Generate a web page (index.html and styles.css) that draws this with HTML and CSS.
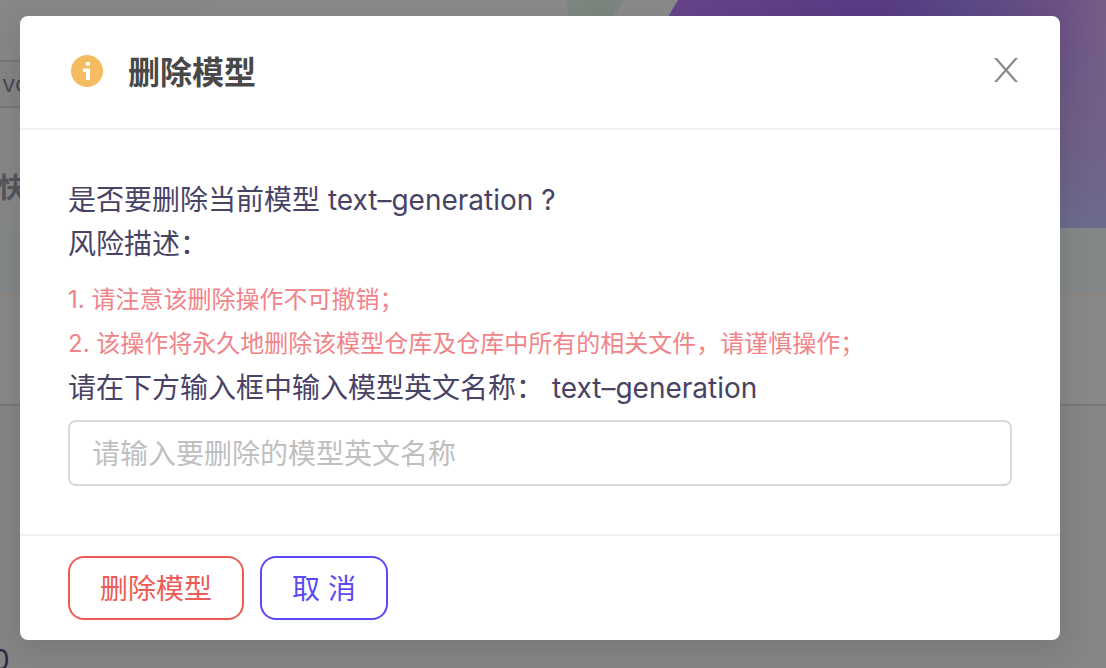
FILE: index.html
```html
<!DOCTYPE html>
<html lang="zh-CN">
<head>
<meta charset="utf-8">
<meta name="viewport" content="width=device-width, initial-scale=1">
<title>删除模型</title>
<link rel="stylesheet" href="styles.css">
</head>
<body>
<div class="screen">
  <div class="page" aria-hidden="true">
    <div class="hero">
      <svg class="hero-art" width="540" height="228" viewBox="0 0 540 228">
        <defs>
          <linearGradient id="band" x1="0" y1="0" x2="1" y2="0">
            <stop offset="0.2" stop-color="#69458b"/>
            <stop offset="0.58" stop-color="#583b85"/>
            <stop offset="0.75" stop-color="#5c4886"/>
            <stop offset="0.9" stop-color="#6a5085"/>
            <stop offset="1" stop-color="#755d86"/>
          </linearGradient>
          <linearGradient id="fade" x1="0" y1="0" x2="0" y2="1">
            <stop offset="0.1" stop-color="#6c6689" stop-opacity="0"/>
            <stop offset="0.55" stop-color="#706387" stop-opacity="0.6"/>
            <stop offset="1" stop-color="#6c6b8c"/>
          </linearGradient>
          <linearGradient id="leaf" x1="0" y1="0" x2="1" y2="0">
            <stop offset="0" stop-color="#7b8880"/>
            <stop offset="1" stop-color="#7c8680"/>
          </linearGradient>
        </defs>
        <path d="M2 0H58L46 18H4Q-1 8 2 0Z" fill="url(#leaf)"/>
        <path d="M112 0H540V228H-22Z" fill="url(#band)"/>
        <path d="M112 0H540V228H-22Z" fill="url(#fade)"/>
      </svg>
      <div class="branch">vo</div>
      <div class="tab">快</div>
    </div>
    <div class="strip"></div>
    <div class="panel"></div>
    <div class="rest"><span class="count">0</span></div>
  </div>

  <section class="modal" role="dialog" aria-modal="true" aria-labelledby="modal-title">
    <header class="modal-header">
      <svg class="info" width="38" height="38" viewBox="0 0 38 38" aria-hidden="true">
        <circle cx="19" cy="18" r="16" fill="#f5bb61"/>
        <path d="M17.700 9h4.300v3.800h-4.300zM14.800 15.600H22V27h-4v-8.300h-3.200z" fill="#fff"/>
      </svg>
      <h1 class="title" id="modal-title">删除模型</h1>
      <button class="close" type="button" aria-label="关闭">
        <svg width="24" height="26" viewBox="0 0 24 26" aria-hidden="true">
          <path d="M0 1H3L12 11.300 21 1H24L13.600 13 24 25H21L12 14.700 3 25H0L10.400 13Z" fill="#8c8c8c"/>
        </svg>
      </button>
    </header>
    <div class="modal-body">
      <p class="text">是否要删除当前模型 text–generation ?</p>
      <p class="text">风险描述：</p>
      <div class="risks">
        <p class="risk">1. 请注意该删除操作不可撤销；</p>
        <p class="risk">2. 该操作将永久地删除该模型仓库及仓库中所有的相关文件，请谨慎操作；</p>
      </div>
      <label class="text" for="model-name">请在下方输入框中输入模型英文名称： text–generation</label>
      <input class="field" id="model-name" type="text" placeholder="请输入要删除的模型英文名称">
    </div>
    <footer class="modal-footer">
      <button class="btn danger" type="button">删除模型</button>
      <button class="btn primary" type="button">取 消</button>
    </footer>
  </section>
</div>
</body>
</html>
```
FILE: styles.css
```css
* {
  box-sizing: border-box;
}

body {
  margin: 0;
  font-family: Inter, "Noto Sans CJK SC", sans-serif;
  background: #858585;
}

p,
h1 {
  margin: 0;
}

.screen {
  display: grid;
  min-height: 100vh;
  overflow: hidden;
}

.page,
.modal {
  grid-area: 1 / 1;
}

/* Dimmed page behind the dialog */
.page {
  display: flex;
  flex-direction: column;
  color: #2c2a42;
}

.hero {
  position: relative;
  height: 228px;
  padding-top: 60px;
  background: linear-gradient(90deg, #858887, #8a8a8a 30%, #8c8c8c);
}

.hero-art {
  position: absolute;
  top: 0;
  right: 0;
}

.branch {
  width: 120px;
  height: 48px;
  padding-left: 2px;
  border: solid #777;
  border-width: 2px 0;
  background: #858384;
  font-size: 24px;
  line-height: 44px;
  color: #4a4a55;
}

.tab {
  padding-top: 60px;
  margin-left: -2px;
  font-size: 28px;
  font-weight: 700;
  line-height: 40px;
  color: #54545c;
}

.strip {
  height: 64px;
  background: #848788;
}

.panel {
  height: 114px;
  border-top: 4px solid #878683;
  border-bottom: 2px solid #79797b;
  background: #878888;
}

.rest {
  display: flex;
  flex: 1;
  align-items: flex-end;
}

.count {
  height: 24px;
  margin-left: -8px;
  font-size: 28px;
  line-height: 32px;
}

/* Dialog */
.modal {
  z-index: 1;
  align-self: start;
  margin: 16px 46px 28px 20px;
  border-radius: 8px;
  background: #fff;
  box-shadow: 0 8px 32px rgba(0, 0, 0, 0.12);
}

.modal-header {
  display: flex;
  align-items: center;
  gap: 22px;
  padding: 32px 40px 32px 48px;
  border-bottom: 2px solid #f0f0f0;
}

.title {
  flex: 1;
  padding-top: 2px;
  font-size: 32px;
  font-weight: 700;
  line-height: 46px;
  color: #484848;
}

.close {
  display: flex;
  padding: 0 2px 4px;
  border: 0;
  background: none;
}

.modal-body {
  display: flex;
  flex-direction: column;
  padding: 48px;
}

.text {
  font-size: 28px;
  line-height: 44px;
  color: #484364;
}

.risks {
  padding-top: 12px;
}

.risk {
  font-size: 24px;
  line-height: 44px;
  color: #f08489;
}

.field {
  width: 100%;
  height: 66px;
  margin-top: 10px;
  padding: 2px 22px 0;
  border: 2px solid #d9d9d9;
  border-radius: 8px;
  background: #fff;
  font: inherit;
  font-size: 28px;
  color: #484364;
}

.field::placeholder {
  color: #bfbfbf;
}

.modal-footer {
  display: flex;
  gap: 16px;
  padding: 20px 48px;
  border-top: 2px solid #f0f0f0;
}

.btn {
  height: 64px;
  padding: 0 30px 2px;
  border: 2px solid;
  border-radius: 16px;
  background: #fff;
  font: inherit;
  font-size: 28px;
  box-shadow: 0 4px 0 rgba(0, 0, 0, 0.01);
}

.danger {
  color: #ed5b56;
}

.primary {
  color: #5b49f5;
}
```
